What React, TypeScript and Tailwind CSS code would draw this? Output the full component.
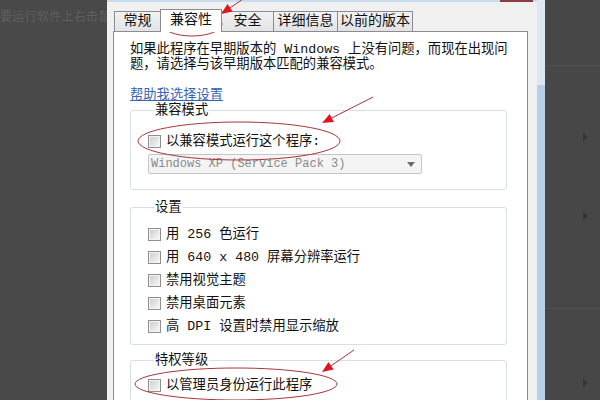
const tabs = [
  { label: '常规', w: 'w-[47px]' },
  { label: '兼容性', w: 'w-[62px]', active: true },
  { label: '安全', w: 'w-[53px]' },
  { label: '详细信息', w: 'w-[65px]' },
  { label: '以前的版本', w: 'w-[76px]' }
];

const settings = ['用 256 色运行', '用 640 x 480 屏幕分辨率运行', '禁用视觉主题', '禁用桌面元素', '高 DPI 设置时禁用显示缩放'];

const Box = () => (
  <span className="h-[13px] w-[13px] shrink-0 border border-[#8e8f8f] bg-[#f4f4f4] p-px">
    <span className="block h-full w-full bg-[linear-gradient(135deg,#cfcfcf,#f6f6f6)]" />
  </span>
);

const Check = ({ label }: { label: string }) => (
  <div className="flex h-[15px] items-center gap-[5px]">
    <Box />
    <span>{label}</span>
  </div>
);

const Arrow = ({ x1, y1, x2, y2 }: { x1: number; y1: number; x2: number; y2: number }) => {
  const a = Math.atan2(y2 - y1, x2 - x1);
  const len = 11;
  const w = 4.5;
  const bx = x2 - Math.cos(a) * len;
  const by = y2 - Math.sin(a) * len;
  const p1 = `${bx + Math.sin(a) * w},${by - Math.cos(a) * w}`;
  const p2 = `${bx - Math.sin(a) * w},${by + Math.cos(a) * w}`;
  return (
    <g>
      <line x1={x1} y1={y1} x2={bx} y2={by} stroke="#a8343a" strokeWidth="1" />
      <polygon points={`${x2},${y2} ${p1} ${p2}`} fill="#e0161e" />
    </g>
  );
};

const App = () => {
  return (
    <div className="relative flex h-[400px] w-[600px] overflow-hidden bg-[#494949] font-['Liberation_Mono','Noto_Sans_CJK_SC',monospace] text-[13.3px] leading-[15px] text-[#111]">
      <div className="w-[107px] shrink-0 overflow-hidden pt-[8px] font-['Noto_Sans_CJK_SC',sans-serif] text-[12px] tracking-[0.3px] whitespace-nowrap text-[#5f5f5f]">
        要运行软件上右击鼠标
      </div>

      <div className="flex w-[438px] shrink-0">
        <div className="flex w-[430px] flex-col bg-[#f0f0f0]">
          <div className="flex h-[3px] justify-end bg-[#c9dcee] pr-[4px]">
            <div className="h-[2px] w-[33px] bg-[#8a3a40]" />
          </div>
          <div className="flex flex-1 flex-col pl-[6px] pr-[9px] pt-[7px]">
            <div className="flex h-[22px] items-end pl-[2px]">
              {tabs.map((t) =>
                t.active ? (
                  <div
                    key={t.label}
                    className={`relative z-10 -mb-px -ml-px flex h-[23px] ${t.w} items-center justify-center border border-b-0 border-[#898c95] bg-white pb-[2px] text-[14px]`}
                  >
                    {t.label}
                  </div>
                ) : (
                  <div
                    key={t.label}
                    className={`-ml-px flex h-[20px] ${t.w} items-center justify-center border border-b-0 border-[#898c95] bg-[linear-gradient(#f2f2f2,#e3e3e3)] text-[14px]`}
                  >
                    {t.label}
                  </div>
                )
              )}
            </div>

            <div className="flex-1 border border-[#898c95] bg-white pl-[16px] pt-[10px]">
              <p className="whitespace-nowrap">
                如果此程序在早期版本的 Windows 上没有问题，而现在出现问
                <br />
                题，请选择与该早期版本匹配的兼容模式。
              </p>
              <div className="mt-[16px] w-fit text-[#3565b3] underline decoration-[#3565b3]">帮助我选择设置</div>

              <fieldset className="w-[377px] rounded-[3px] border border-[#d5dfe5] pb-[15px] pl-[17px]">
                <legend className="ml-[6px] px-px">兼容模式</legend>
                <div className="mt-[16px]">
                  <Check label="以兼容模式运行这个程序:" />
                </div>
                <div className="mt-[5px] flex h-[20px] w-[274px] items-center justify-between rounded-[2px] border border-[#c6c6c6] bg-[#f4f4f4] pl-[2px] pr-[6px] text-[12px] text-[#8a8a8a]">
                  <span>Windows XP (Service Pack 3)</span>
                  <span className="h-0 w-0 border-x-[4px] border-t-[5px] border-x-transparent border-t-[#6a6a6a]" />
                </div>
              </fieldset>

              <fieldset className="mt-[10px] w-[377px] rounded-[3px] border border-[#d5dfe5] pb-[6px] pl-[17px] pt-[8px]">
                <legend className="ml-[6px] px-px">设置</legend>
                {settings.map((s) => (
                  <div key={s} className="flex h-[23px] items-center">
                    <Check label={s} />
                  </div>
                ))}
              </fieldset>

              <fieldset className="mt-[8px] h-[60px] w-[377px] rounded-[3px] border border-[#d5dfe5] pl-[17px]">
                <legend className="ml-[6px] px-px">特权等级</legend>
                <div className="mt-[10px]">
                  <Check label="以管理员身份运行此程序" />
                </div>
              </fieldset>
            </div>
          </div>
        </div>
        <div className="w-[8px] bg-[linear-gradient(#dbe8f4_0,#dbe8f4_85px,#b8d0e7_85px)]" />
      </div>

      <div className="flex flex-1 flex-col bg-[#474747]">
        <div className="h-[66px] border-b border-[#515151]" />
        <div className="mt-[67px] ml-[38px] h-0 w-0 border-y-[4px] border-l-[5px] border-y-transparent border-l-[#343434]" />
        <div className="mt-[71px] ml-[38px] h-0 w-0 border-y-[4px] border-l-[5px] border-y-transparent border-l-[#343434]" />
        <div className="mt-[88px] h-px bg-[#515151]" />
        <div className="mt-[70px] ml-[38px] h-0 w-0 border-y-[4px] border-l-[5px] border-y-transparent border-l-[#343434]" />
      </div>

      <svg className="pointer-events-none absolute inset-0" width="600" height="400">
        <ellipse cx="192" cy="24" rx="30" ry="12" fill="none" stroke="#a8343a" strokeWidth="1" />
        <Arrow x1={243} y1={-1} x2={221} y2={14} />
        <ellipse cx="239" cy="141" rx="101" ry="19" fill="none" stroke="#a8343a" strokeWidth="1" />
        <Arrow x1={373} y1={97} x2={322} y2={123} />
        <ellipse cx="236" cy="384" rx="101" ry="16" fill="none" stroke="#a8343a" strokeWidth="1" />
        <Arrow x1={354} y1={350} x2={322} y2={372} />
      </svg>
    </div>
  );
};

export default App;
